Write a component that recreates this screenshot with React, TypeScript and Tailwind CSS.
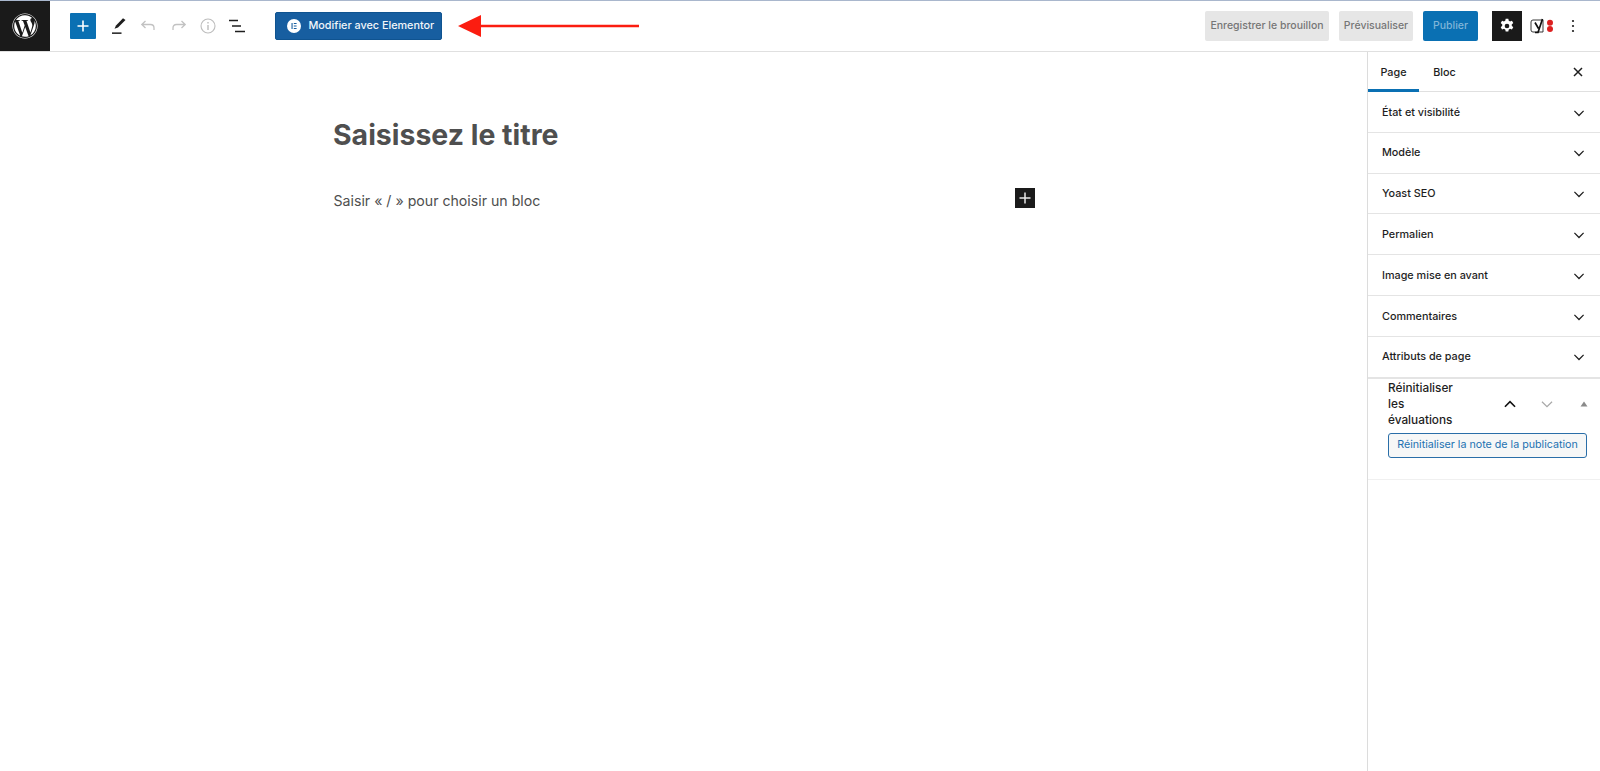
import React from "react";
import { FaWordpress } from "react-icons/fa";

const Chevron = ({ up = false, color = "#1e1e1e", size = 20, w = 1.5 }: { up?: boolean; color?: string; size?: number; w?: number }) => (
  <svg width={size} height={size} viewBox="0 0 24 24" fill="none" stroke={color} strokeWidth={w}>
    <path d={up ? "M6.5 15 L12 9.5 L17.5 15" : "M6.5 9.5 L12 15 L17.5 9.5"} />
  </svg>
);

const Row = ({ label }: { label: string }) => (
  <div className="h-[40.8px] flex items-center justify-between pl-[14px] pr-[11px] pt-[1.5px] border-b border-[#e4e4e4] shrink-0">
    <span className="text-[10.8px] font-medium text-[#1e1e1e]">{label}</span>
    <Chevron />
  </div>
);

const rows = ["État et visibilité", "Modèle", "Yoast SEO", "Permalien", "Image mise en avant", "Commentaires", "Attributs de page"];

export default function App() {
  return (
    <div className="w-[1600px] h-[771px] bg-white flex flex-col overflow-hidden font-['Inter',sans-serif]">
      <header className="h-[52px] shrink-0 flex items-stretch border-t border-t-[#a9b7cd] border-b border-b-[#e0e0e0]">
        <div className="w-[50px] bg-[#1a1a1a] flex items-center justify-center">
          <FaWordpress size={26} color="#fff" />
        </div>
        <div className="flex items-center pl-5">
          <div className="w-[26px] h-[26px] bg-[#0a70b3] rounded-[1px] flex items-center justify-center">
            <svg width="14" height="14" viewBox="0 0 14 14" stroke="#fff" strokeWidth="1.6"><path d="M7 1.500V12.500M1.500 7H12.500" /></svg>
          </div>
          <svg className="ml-[15px]" width="16" height="18" viewBox="0 0 16 18" fill="#1e1e1e">
            <path d="M12 1.200 L14.500 3 L7 10.500 L3.500 11.800 L5 8.500 Z" />
            <rect x="1" y="15.400" width="9.500" height="1.500" />
          </svg>
          <svg className="ml-[13px]" width="16" height="14" viewBox="0 0 16 14" fill="none" stroke="#c2c2c2" strokeWidth="1.300"><path d="M5.500 2 L1.800 5.500 L5.500 9 M2 5.500 H10.500 C13 5.500 14 7 14 9 V11" /></svg>
          <svg className="ml-[15px]" width="16" height="14" viewBox="0 0 16 14" fill="none" stroke="#c2c2c2" strokeWidth="1.300"><path d="M10.500 2 L14.200 5.500 L10.500 9 M14 5.500 H5.500 C3 5.500 2 7 2 9 V11" /></svg>
          <svg className="ml-[13px]" width="16" height="16" viewBox="0 0 16 16" fill="none" stroke="#bdbdbd" strokeWidth="1.100"><circle cx="8" cy="8" r="7" /><path d="M8 7V12 M8 4V5.500" strokeWidth="1.400" /></svg>
          <svg className="ml-[13px]" width="16" height="14" viewBox="0 0 16 14" fill="none" stroke="#1e1e1e" strokeWidth="1.500"><path d="M0 1.500H9 M3 7H12 M6 12.500H16" /></svg>
          <button className="ml-[29.5px] w-[167px] h-[28px] bg-[#175ea0] border border-[#0f5390] rounded-[2px] flex items-center pl-[11px] text-white whitespace-nowrap">
            <svg className="shrink-0" width="14" height="14" viewBox="0 0 14 14">
              <circle cx="7" cy="7" r="7" fill="#fff" />
              <path d="M4.500 4H5.600V10H4.500Z M6.800 4H9.600V5H6.800Z M6.800 6.500H9.600V7.500H6.800Z M6.800 9H9.600V10H6.800Z" fill="#175ea0" />
            </svg>
            <span className="ml-[8px] text-[10.8px] font-medium text-[#f2f6fa]">Modifier avec Elementor</span>
          </button>
          <svg className="ml-[16.5px]" width="182" height="24" viewBox="0 0 182 24">
            <path d="M0 12 L23 1 V10.700 H181 V13.300 H23 V23 Z" fill="#fb1d10" />
          </svg>
        </div>
        <div className="ml-auto flex items-center pr-[25px] whitespace-nowrap">
          <div className="w-[124px] h-[30px] bg-[#e6e6e6] rounded-[2px] flex items-center justify-center text-[10.5px] font-medium text-[#767676]">Enregistrer le brouillon</div>
          <div className="ml-[10px] w-[74px] h-[30px] bg-[#e6e6e6] rounded-[2px] flex items-center justify-center text-[10.5px] font-medium text-[#767676]">Prévisualiser</div>
          <div className="ml-[10px] w-[55px] h-[30px] bg-[#0a70b3] rounded-[2px] flex items-center justify-center text-[10.5px] font-medium text-[#7fb5d8]">Publier</div>
          <div className="ml-[14px] w-[30px] h-[30px] bg-[#1a1a1a] flex items-center justify-center">
            <svg width="16" height="16" viewBox="0 0 24 24" fill="#fff">
              <path fillRule="evenodd" d="M10 1h4l.6 3a8 8 0 0 1 1.900 1.100l2.900-1 2 3.500-2.300 2a8 8 0 0 1 0 2.200l2.300 2-2 3.500-2.900-1a8 8 0 0 1-1.900 1.100l-.6 3h-4l-.6-3a8 8 0 0 1-1.900-1.100l-2.900 1-2-3.500 2.300-2a8 8 0 0 1 0-2.200l-2.300-2 2-3.500 2.900 1A8 8 0 0 1 9.400 4zM12 8.500a3.500 3.500 0 1 0 0 7 3.500 3.500 0 0 0 0-7z" />
            </svg>
          </div>
          <svg className="ml-2" width="24" height="16" viewBox="0 0 24 16">
            <path d="M3 2H13 V14 H3 Q1 14 1 12 V4 Q1 2 3 2Z" fill="none" stroke="#222" strokeWidth="0.900" />
            <path d="M5 4.500 L8.500 10.500 M12.500 1 L8 14.500 H5" fill="none" stroke="#111" strokeWidth="1.700" />
            <circle cx="20" cy="4.800" r="3" fill="#dc2020" />
            <circle cx="20" cy="11" r="3" fill="#dc2020" />
          </svg>
          <svg className="ml-[17px]" width="4" height="14" viewBox="0 0 4 14" fill="#1e1e1e">
            <circle cx="2" cy="2" r="1.100" /><circle cx="2" cy="7" r="1.100" /><circle cx="2" cy="12" r="1.100" />
          </svg>
        </div>
      </header>
      <div className="flex-1 flex min-h-0">
        <main className="flex-1 min-w-0 pt-[66px] pl-[333px]">
          <h1 className="text-[28.45px] leading-[34px] font-bold text-[#4f4f4f]">Saisissez le titre</h1>
          <div className="w-[702px] mt-[36px] flex items-start justify-between">
            <span className="text-[14.15px] leading-[24px] pt-[1px] pl-[0.5px] text-[#4f4f4f]">Saisir « / » pour choisir un bloc</span>
            <div className="w-5 h-5 bg-[#1a1a1a] flex items-center justify-center">
              <svg width="12" height="12" viewBox="0 0 12 12" stroke="#e8e8e8" strokeWidth="1.500"><path d="M6 0.500V11.500M0.500 6H11.500" /></svg>
            </div>
          </div>
        </main>
        <aside className="w-[233px] shrink-0 border-l border-[#dcdcdc] flex flex-col">
          <div className="h-[40px] flex items-stretch border-b border-[#e0e0e0] shrink-0 pr-[17px]">
            <div className="w-[51px] flex items-center justify-center text-[10.8px] font-medium text-[#1e1e1e] border-b-[3px] border-[#0a70b3] -mb-px pt-[6px]">Page</div>
            <div className="w-[51px] flex items-center justify-center text-[10.8px] font-medium text-[#1e1e1e] pt-[3px]">Bloc</div>
            <div className="ml-auto flex items-center pt-[1px]">
              <svg width="10" height="10" viewBox="0 0 10 10" stroke="#1e1e1e" strokeWidth="1.500"><path d="M1 1L9 9M9 1L1 9" /></svg>
            </div>
          </div>
          {rows.map((r) => <Row key={r} label={r} />)}
          <div className="h-[102px] border-t-2 border-[#e4e4e4] -mt-px pl-[20px] pr-[12px] flex flex-col">
            <div className="flex items-center h-[49px] pt-[1px]">
              <span className="w-[111px] text-[11.8px] leading-[16px] font-medium text-[#1e1e1e]">Réinitialiser<br />les<br />évaluations</span>
              <Chevron up size={22} w={1.800} color="#111" />
              <span className="ml-[15px]"><Chevron size={22} w={1.300} color="#a8a8a8" /></span>
              <svg className="ml-[22px]" width="8" height="6" viewBox="0 0 8 6" fill="#8a8a8a"><path d="M4 0.500L7.500 5.500H0.500Z" /></svg>
            </div>
            <div className="mt-[5px] w-[199px] h-[25px] bg-[#f6f7f7] border border-[#2a6ea8] rounded-[3px] flex items-center justify-center text-[10.7px] text-[#2271b1] whitespace-nowrap">Réinitialiser la note de la publication</div>
          </div>
          <div className="border-t border-[#f0f0f0]" />
        </aside>
      </div>
    </div>
  );
}
